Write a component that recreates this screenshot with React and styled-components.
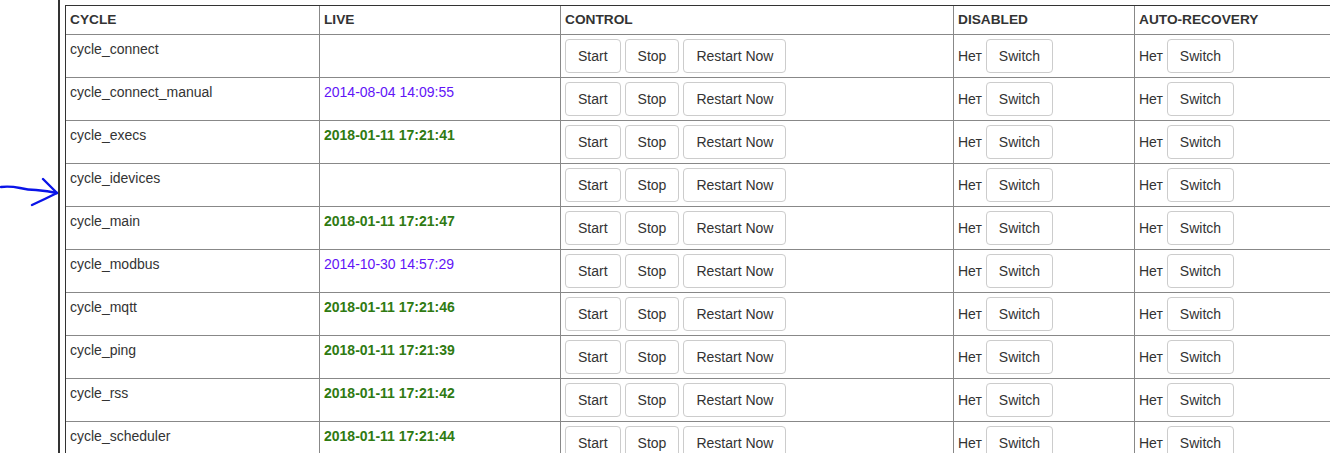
import React from 'react';
import styled, { createGlobalStyle } from 'styled-components';

const GlobalStyle = createGlobalStyle`
  html, body {
    margin: 0;
    padding: 0;
    height: 100%;
    overflow: hidden;
    background: #fff;
  }
  body {
    font-family: "Liberation Sans", Arial, sans-serif;
    font-size: 14px;
    color: #333;
  }
`

const Page = styled.div`
  display: flex;
  height: 453px;
`

const Gutter = styled.div`
  width: 58px;
  flex: none;
  padding-top: 177px;
  box-sizing: border-box;
`

const Main = styled.div`
  flex: 1;
  border-left: 2px solid #333;
  padding: 5px 0 0 5px;
  overflow: hidden;
`

const Table = styled.table`
  border-collapse: separate;
  border-spacing: 0;
  table-layout: fixed;
  width: 1270px;
  border-top: 1px solid #333;
  border-left: 1px solid #333;
`

const Th = styled.th`
  box-sizing: border-box;
  width: ${(p) => p.$w}px;
  text-align: left;
  font-size: 13.7px;
  font-weight: bold;
  line-height: 20px;
  padding: 4px;
  color: #333;
  text-transform: uppercase;
  border-right: 1px solid #888;
  border-bottom: 1px solid #888;
`

const Td = styled.td`
  box-sizing: border-box;
  vertical-align: top;
  line-height: 20px;
  padding: 4px;
  height: 43px;
  white-space: nowrap;
  border-right: 1px solid #888;
  border-bottom: 1px solid #888;
`

const Live = styled.span`
  color: ${(p) => (p.$old ? '#6214f7' : '#2f7a12')};
  font-weight: ${(p) => (p.$old ? 'normal' : 'bold')};
`

const Button = styled.button`
  display: inline-block;
  font-family: "Liberation Sans", Arial, sans-serif;
  font-size: 14px;
  line-height: 20px;
  padding: 6px 12px;
  color: #333;
  background: #fff;
  border: 1px solid #ccc;
  border-radius: 4px;
  margin-right: 4px;
  cursor: pointer;
`

const Flag = styled.span`
  margin-right: 4px;
`

// hand-drawn annotation arrow in the left margin
const Arrow = () => (
  <svg width="58" height="32" viewBox="0 177 58 32">
    <g fill="none" stroke="#0a14e8" strokeWidth="2.4" strokeLinecap="round" strokeLinejoin="round">
      <path d="M1 187 Q 10 186 20 188 Q 28 190 36 190 Q 48 191 57 193" />
      <path d="M43 179 Q 50 186 57 193" />
      <path d="M57 193 Q 45 199 32 205" />
    </g>
  </svg>
)

const rows = [
  { name: 'cycle_connect', live: '' },
  { name: 'cycle_connect_manual', live: '2014-08-04 14:09:55', old: true },
  { name: 'cycle_execs', live: '2018-01-11 17:21:41' },
  { name: 'cycle_idevices', live: '' },
  { name: 'cycle_main', live: '2018-01-11 17:21:47' },
  { name: 'cycle_modbus', live: '2014-10-30 14:57:29', old: true },
  { name: 'cycle_mqtt', live: '2018-01-11 17:21:46' },
  { name: 'cycle_ping', live: '2018-01-11 17:21:39' },
  { name: 'cycle_rss', live: '2018-01-11 17:21:42' },
  { name: 'cycle_scheduler', live: '2018-01-11 17:21:44' },
]

export default function App() {
  return (
    <>
      <GlobalStyle />
      <Page>
        <Gutter>
          <Arrow />
        </Gutter>
        <Main>
          <Table>
            <thead>
              <tr>
                <Th $w={254}>Cycle</Th>
                <Th $w={241}>Live</Th>
                <Th $w={393}>Control</Th>
                <Th $w={181}>Disabled</Th>
                <Th $w={200}>Auto-recovery</Th>
              </tr>
            </thead>
            <tbody>
              {rows.map((r) => (
                <tr key={r.name}>
                  <Td>{r.name}</Td>
                  <Td>{r.live && <Live $old={r.old}>{r.live}</Live>}</Td>
                  <Td>
                    <Button>Start</Button>
                    <Button>Stop</Button>
                    <Button>Restart Now</Button>
                  </Td>
                  <Td>
                    <Flag>Нет</Flag>
                    <Button>Switch</Button>
                  </Td>
                  <Td>
                    <Flag>Нет</Flag>
                    <Button>Switch</Button>
                  </Td>
                </tr>
              ))}
            </tbody>
          </Table>
        </Main>
      </Page>
    </>
  )
}
